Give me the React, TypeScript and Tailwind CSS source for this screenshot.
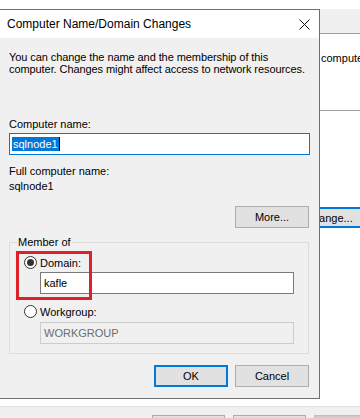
import React from "react";

function Radio({ checked }: { checked?: boolean }) {
  return (
    <div className="flex h-[13px] w-[13px] shrink-0 items-center justify-center rounded-full border border-[#333333] bg-white">
      {checked && <div className="h-[7px] w-[7px] rounded-full bg-[#333333]" />}
    </div>
  );
}

function WinButton({ children, primary, className = "" }: { children?: React.ReactNode; primary?: boolean; className?: string }) {
  return (
    <div
      className={
        "flex h-[22px] w-[74px] shrink-0 items-center justify-center bg-[#e1e1e1] " +
        (primary ? "border-2 border-[#0078d7] " : "border border-[#adadad] ") +
        className
      }
    >
      {children}
    </div>
  );
}

export default function App() {
  return (
    <div className="relative h-[418px] w-[360px] overflow-hidden bg-white font-['Liberation_Sans',Arial,sans-serif] text-[11px] leading-[12px] text-black">
      {/* background window */}
      <div className="flex h-full flex-col">
        <div className="mt-[9px] h-[25px] shrink-0 border-b border-[#a0a0a0] bg-[#f0f0f0]" />
        <div className="mt-[18px] overflow-hidden whitespace-nowrap pl-[321px]">computer</div>
        <div className="mt-[46px] h-px shrink-0 bg-[#a0a0a0]" />
        <div className="ml-[300px] mt-[96px] flex h-[21px] w-[80px] shrink-0 items-center border-2 border-[#0078d7] bg-[#e1e1e1] pl-[3px] whitespace-nowrap">
          Change...
        </div>
        <div className="flex-1" />
        <div className="flex h-[12px] shrink-0 gap-[8px] overflow-hidden border-t border-[#dfdfdf] bg-[#f0f0f0] pl-[152px] pt-[8px]">
          <div className="h-[23px] w-[73px] shrink-0 border border-[#adadad] bg-[#e1e1e1]" />
          <div className="h-[23px] w-[73px] shrink-0 border border-[#adadad] bg-[#e1e1e1]" />
          <div className="h-[23px] w-[73px] shrink-0 border border-[#bfbfbf] bg-[#cccccc]" />
        </div>
      </div>

      {/* dialog */}
      <div className="absolute left-[-1px] top-[9px] flex h-[390px] w-[321px] flex-col border border-[#6f6f6f] bg-[#f0f0f0]">
        <div className="flex h-[28px] shrink-0 items-center justify-between bg-white pl-[7px] text-[12px] leading-[16px]">
          <span>Computer Name/Domain Changes</span>
          <div className="flex h-full w-[30px] items-center justify-center">
            <svg width="11" height="11" viewBox="0 0 11 11">
              <path d="M0.5 0.5 L10.5 10.5 M10.5 0.5 L0.5 10.5" stroke="#111" strokeWidth="1" fill="none" />
            </svg>
          </div>
        </div>

        <div className="flex flex-1 flex-col px-[9px]">
          <p className="mt-[13px] whitespace-nowrap tracking-[-0.08px]">
            You can change the name and the membership of this
            <br />
            computer. Changes might affect access to network resources.
          </p>

          <div className="mt-[43px]">Computer name:</div>
          <div className="mt-[3px] flex h-[22px] items-center border border-[#0078d7] bg-white pl-[2px]">
            <span className="bg-[#0078d7] px-px leading-[14px] text-white">sqlnode1</span>
            <span className="h-[14px] w-px bg-black" />
          </div>

          <div className="mt-[10px]">Full computer name:</div>
          <div className="mt-[3px]">sqlnode1</div>

          <div className="mt-[14px] flex justify-end pr-[1px]">
            <WinButton>More...</WinButton>
          </div>

          <div className="relative mt-[14px] h-[112px] w-[300px] shrink-0 border border-[#dcdcdc] pl-[14px] pt-[13px]">
            <div className="absolute left-[7px] top-[-7px] bg-[#f0f0f0] px-px">Member of</div>

            <div className="flex items-center gap-[3px]">
              <Radio checked />
              <span>Domain:</span>
            </div>
            <div className="ml-[16px] mt-[3px] flex h-[22px] w-[254px] items-center border border-[#7a7a7a] bg-white pl-[3px]">
              kafle
            </div>

            <div className="mt-[11px] flex items-center gap-[3px]">
              <Radio />
              <span>Workgroup:</span>
            </div>
            <div className="ml-[16px] mt-[4px] flex h-[22px] w-[254px] items-center border border-[#cccccc] bg-[#f0f0f0] pl-[3px] text-[#6d6d6d]">
              WORKGROUP
            </div>

            <div className="absolute left-[6px] top-[8px] h-[49px] w-[76px] border-[3px] border-[#dc2228]" />
          </div>

          <div className="mt-[11px] flex justify-end gap-[7px] pr-[1px]">
            <WinButton primary>OK</WinButton>
            <WinButton>Cancel</WinButton>
          </div>
        </div>
      </div>
    </div>
  );
}
